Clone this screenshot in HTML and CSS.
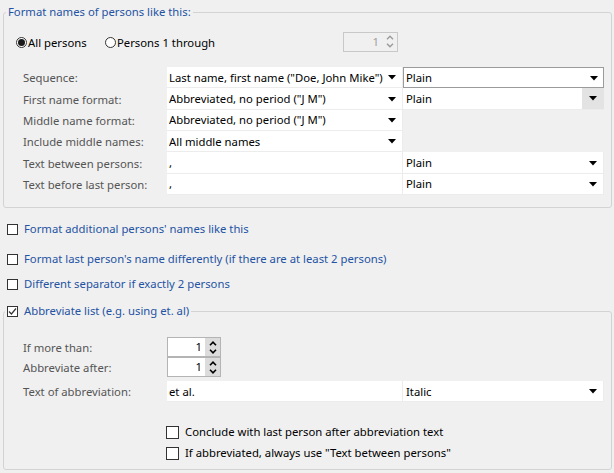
FILE: index.html
```html
<!DOCTYPE html>
<html>
<head>
<meta charset="utf-8">
<link rel="stylesheet" href="styles.css">
</head>
<body>
<fieldset class="group g1">
  <legend class="legend">Format names of persons like this:</legend>
  <div class="radio-row">
    <label class="radio r1"><span class="rb on"></span>All persons</label>
    <label class="radio r2"><span class="rb"></span>Persons 1 through</label>
    <div class="spin disabled">
      <span class="spin-val">1</span>
      <span class="spin-btns">
        <svg width="8" height="5" viewBox="0 0 8 5"><path d="M1 4.2 L4 1.2 L7 4.2" fill="none" stroke="#9a9a9a" stroke-width="1.4"/></svg>
        <svg width="8" height="5" viewBox="0 0 8 5"><path d="M1 0.8 L4 3.8 L7 0.8" fill="none" stroke="#9a9a9a" stroke-width="1.4"/></svg>
      </span>
    </div>
  </div>
  <div class="form-grid">
    <div class="lbl">Sequence:</div>
    <div class="combo"><span>Last name, first name ("Doe, John Mike")</span><svg class="arr" width="8" height="5" viewBox="0 0 8 5"><polygon points="0,0 8,0 4,4.6" fill="#000"/></svg></div>
    <div class="combo c2 focused"><span>Plain</span><svg class="arr" width="8" height="5" viewBox="0 0 8 5"><polygon points="0,0 8,0 4,4.6" fill="#000"/></svg></div>

    <div class="lbl">First name format:</div>
    <div class="combo"><span>Abbreviated, no period ("J M")</span><svg class="arr" width="8" height="5" viewBox="0 0 8 5"><polygon points="0,0 8,0 4,4.6" fill="#000"/></svg></div>
    <div class="combo c2 hover"><span>Plain</span><span class="arr-box"><svg width="8" height="5" viewBox="0 0 8 5"><polygon points="0,0 8,0 4,4.6" fill="#000"/></svg></span></div>

    <div class="lbl">Middle name format:</div>
    <div class="combo"><span>Abbreviated, no period ("J M")</span><svg class="arr" width="8" height="5" viewBox="0 0 8 5"><polygon points="0,0 8,0 4,4.6" fill="#000"/></svg></div>
    <div class="empty"></div>

    <div class="lbl">Include middle names:</div>
    <div class="combo"><span>All middle names</span><svg class="arr" width="8" height="5" viewBox="0 0 8 5"><polygon points="0,0 8,0 4,4.6" fill="#000"/></svg></div>
    <div class="empty"></div>

    <div class="lbl">Text between persons:</div>
    <div class="text">,</div>
    <div class="combo c2"><span>Plain</span><svg class="arr" width="8" height="5" viewBox="0 0 8 5"><polygon points="0,0 8,0 4,4.6" fill="#000"/></svg></div>

    <div class="lbl">Text before last person:</div>
    <div class="text">,</div>
    <div class="combo c2"><span>Plain</span><svg class="arr" width="8" height="5" viewBox="0 0 8 5"><polygon points="0,0 8,0 4,4.6" fill="#000"/></svg></div>
  </div>
</fieldset>

<div class="cb-list">
  <label class="cb cb-a"><span class="box"></span>Format additional persons' names like this</label>
  <label class="cb cb-b"><span class="box"></span>Format last person's name differently (if there are at least 2 persons)</label>
  <label class="cb cb-c"><span class="box"></span>Different separator if exactly 2 persons</label>
</div>

<fieldset class="group g2">
  <legend class="legend cb-legend"><span class="box checked"><svg width="9" height="9" viewBox="0 0 9 9"><path d="M1 4.5 L3.4 7 L8 1.5" fill="none" stroke="#333" stroke-width="1.2"/></svg></span>Abbreviate list (e.g. using et. al)</legend>
  <div class="form-grid g2-grid">
    <div class="lbl">If more than:</div>
    <div class="spin on">
      <span class="spin-val">1</span>
      <span class="spin-btns">
        <svg width="8" height="5" viewBox="0 0 8 5"><path d="M1 4.2 L4 1.2 L7 4.2" fill="none" stroke="#000" stroke-width="1.6"/></svg>
        <svg width="8" height="5" viewBox="0 0 8 5"><path d="M1 0.8 L4 3.8 L7 0.8" fill="none" stroke="#000" stroke-width="1.6"/></svg>
      </span>
    </div>
    <div class="empty"></div>

    <div class="lbl">Abbreviate after:</div>
    <div class="spin on">
      <span class="spin-val">1</span>
      <span class="spin-btns">
        <svg width="8" height="5" viewBox="0 0 8 5"><path d="M1 4.2 L4 1.2 L7 4.2" fill="none" stroke="#000" stroke-width="1.6"/></svg>
        <svg width="8" height="5" viewBox="0 0 8 5"><path d="M1 0.8 L4 3.8 L7 0.8" fill="none" stroke="#000" stroke-width="1.6"/></svg>
      </span>
    </div>
    <div class="empty"></div>

    <div class="lbl lbl-abbr">Text of abbreviation:</div>
    <div class="text">et al.</div>
    <div class="combo c2"><span>Italic</span><svg class="arr" width="8" height="5" viewBox="0 0 8 5"><polygon points="0,0 8,0 4,4.6" fill="#000"/></svg></div>
  </div>
  <div class="sub-cbs">
    <label class="cb dark"><span class="box big"></span>Conclude with last person after abbreviation text</label>
    <label class="cb dark"><span class="box big"></span>If abbreviated, always use "Text between persons"</label>
  </div>
</fieldset>
</body>
</html>
```

FILE: styles.css
```css
* { box-sizing: border-box; }

html, body {
  margin: 0;
  padding: 0;
}

body {
  width: 614px;
  height: 473px;
  overflow: hidden;
  background: #f0f0f0;
  font-family: "Noto Sans", "Open Sans", sans-serif;
  font-size: 11.3px;
  line-height: 16px;
  color: #000;
}

.group {
  margin: 4px 2px 0 3px;
  padding: 0;
  border: 1px solid #d3d3d3;
  border-radius: 3px;
  min-width: 0;
}

.legend {
  margin-left: 2px;
  padding: 0 2px;
  color: #2453a3;
  line-height: 16px;
}

/* radio row */
.radio-row {
  display: flex;
  align-items: center;
  height: 21px;
  margin-top: 11px;
  padding-left: 12px;
}

.radio {
  display: flex;
  align-items: center;
  gap: 1px;
  white-space: nowrap;
  padding-top: 2px;
}

.r1 { width: 89px; }
.r2 { width: 238px; }

.rb {
  width: 11px;
  height: 11px;
  border: 1px solid #333;
  border-radius: 50%;
  background: #fff;
  display: flex;
  align-items: center;
  justify-content: center;
}

.rb.on::after {
  content: "";
  width: 7px;
  height: 7px;
  border-radius: 50%;
  background: #1a1a1a;
}

/* spinner */
.spin {
  display: flex;
  width: 55px;
  height: 20px;
  border: 1px solid #c4c4c4;
}

.spin.disabled {
  background: #f0f0f0;
  border-color: #c8c8c8;
  color: #a0a0a0;
}

.spin.on {
  width: 54px;
  background: #fff;
  border-color: #b4b4b4;
}

.spin-val {
  flex: 1;
  text-align: right;
  padding-right: 3px;
  line-height: 18px;
}

.spin-btns {
  width: 15px;
  display: flex;
  flex-direction: column;
  align-items: center;
  justify-content: space-around;
  padding: 1px 0;
}

.spin.on .spin-btns {
  background: #dcdcdc;
}

/* grid of fields */
.form-grid {
  display: grid;
  grid-template-columns: 144px 236px 201px;
  grid-auto-rows: 21.35px;
  margin-top: 15px;
  margin-bottom: 12px;
  padding-left: 19px;
}

.lbl {
  color: #555;
  display: flex;
  align-items: center;
  white-space: nowrap;
  padding-top: 1px;
}

.combo, .text {
  background: #fff;
  display: flex;
  align-items: center;
  white-space: nowrap;
  padding-left: 2px;
  padding-top: 1px;
  border-bottom: 1px solid #ececec;
  border-right: 1px solid #ececec;
}

.combo span:first-child {
  flex: 1;
  overflow: hidden;
}

.combo .arr {
  margin-right: 6px;
  flex: none;
}

.combo.c2 {
  padding-left: 3px;
}

.combo.focused {
  border: 1px solid #9b9b9b;
  padding-left: 2px;
}

.combo.focused .arr {
  margin-right: 5px;
}

.combo.hover {
  border-right: none;
  padding-top: 0;
}

.combo.hover span:first-child {
  padding-top: 1px;
}

.arr-box {
  width: 22px;
  align-self: stretch;
  background: #e3e3e3;
  display: flex;
  align-items: center;
  justify-content: center;
}

/* checkbox list */
.cb-list {
  display: flex;
  flex-direction: column;
  padding-left: 7px;
}

.cb {
  display: flex;
  align-items: center;
  gap: 6px;
  color: #2453a3;
  white-space: nowrap;
  height: 16px;
}

.cb-a { margin-top: 13px; }
.cb-b { margin-top: 14px; }
.cb-c { margin-top: 9px; }

.box {
  width: 11px;
  height: 11px;
  border: 1px solid #333;
  background: #fff;
  flex: none;
  display: inline-flex;
  align-items: center;
  justify-content: center;
}

.box.big {
  width: 13px;
  height: 13px;
}

.g2 {
  margin-top: 11px;
  height: 167px;
}

.cb-legend {
  display: flex;
  align-items: center;
  gap: 6px;
  margin-left: 1px;
}

.g2-grid {
  grid-template-rows: 20px 20px 25px;
  grid-auto-rows: auto;
  margin-top: 18px;
  margin-bottom: 0;
}

.g2-grid .text,
.g2-grid .combo,
.g2-grid .lbl-abbr {
  margin-top: 4px;
}

.sub-cbs {
  display: flex;
  flex-direction: column;
  gap: 5px;
  padding-left: 162px;
  margin-top: 22px;
}

.cb.dark {
  color: #000;
}
```
